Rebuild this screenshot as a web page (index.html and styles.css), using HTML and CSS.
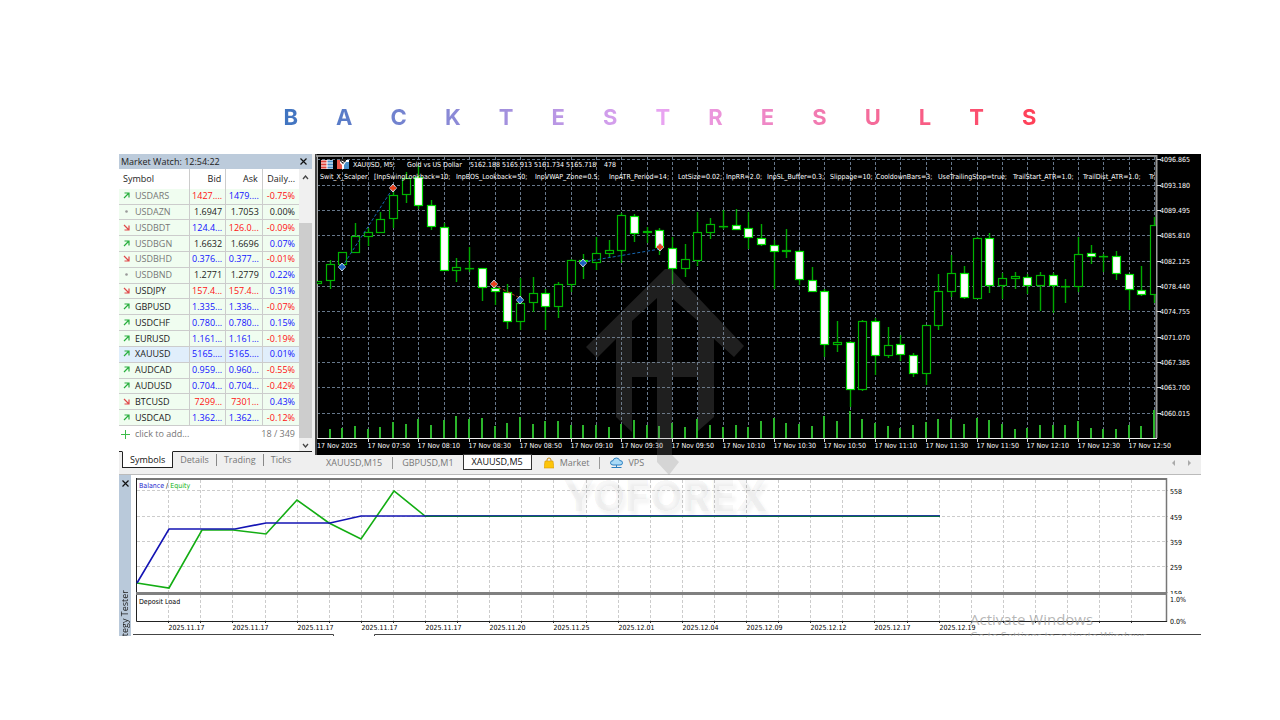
FILE: index.html
```html
<!DOCTYPE html>
<html lang="en">

<head>
    <meta charset="UTF-8">
    <meta name="viewport" content="width=device-width, initial-scale=1.0">
    <title>Backtest Results</title>
    <link rel="stylesheet" href="styles.css">
</head>

<body>
    <h1 class="title" aria-label="Backtest Results">
        <span>B</span><span>A</span><span>C</span><span>K</span><span>T</span><span>E</span><span>S</span><span>T</span><span>R</span><span>E</span><span>S</span><span>U</span><span>L</span><span>T</span><span>S</span>
    </h1>

    <main class="platform">
        <div class="top">
            <section class="watch">
                <header class="watch-header">
                    <h2>Market Watch: 12:54:22</h2>
                    <button class="close" aria-label="Close Market Watch">
                        <svg width="7" height="7" viewBox="0 0 7 7"><path d="M.5 .5 6.500 6.500M6.500 .5 .5 6.500" /></svg>
                    </button>
                </header>
                <div class="watch-body">
                    <div class="watch-list">
                        <table>
                            <thead>
                                <tr>
                                    <th class="symbol">Symbol</th>
                                    <th>Bid</th>
                                    <th>Ask</th>
                                    <th>Daily...</th>
                                </tr>
                            </thead>
                            <tbody id="quotes"></tbody>
                        </table>
                        <div class="add-row">
                            <svg width="9" height="9" viewBox="0 0 9 9"><path d="M4.500 0V9M0 4.500H9" /></svg>
                            <button>click to add...</button>
                            <span>18 / 349</span>
                        </div>
                    </div>
                    <div class="scrollbar">
                        <svg width="7" height="5" viewBox="0 0 7 5"><path d="M1 4 3.500 1 6 4" /></svg>
                        <div class="thumb"></div>
                        <svg width="7" height="5" viewBox="0 0 7 5"><path d="M1 1 3.500 4 6 1" /></svg>
                    </div>
                </div>
                <nav class="watch-tabs">
                    <button class="active">Symbols</button>
                    <button>Details</button>
                    <button>Trading</button>
                    <button>Ticks</button>
                </nav>
            </section>

            <section class="price">
                <svg class="price-chart" id="price-chart" viewBox="315 154 886 301" role="img" aria-label="XAUUSD M5 price chart">
                    <rect x="315" y="154" width="886" height="301" fill="#000" />
                    <rect x="315" y="154" width="2" height="301" fill="#444" />
                    <g id="price-grid"></g>
                    <path d="M316 156H1156" stroke="#8c8c8c" stroke-width="2" />
                    <path d="M317.500 156V438" stroke="#aaa" />
                    <path d="M1156.500 155V438" stroke="#999" stroke-width="2" />
                    <path d="M317 438.500H1157" stroke="#eee" />
                    <clipPath id="plot"><rect x="317" y="156" width="839" height="282" /></clipPath>
                    <g id="candles" clip-path="url(#plot)"></g>
                    <g class="trades">
                        <path d="M342 267 393 188M583 262 660 249" stroke="#1766b0" />
                        <path d="M494 285 520 298" stroke="#c0401c" />
                    </g>
                    <g id="deals"></g>
                    <g class="chart-icons">
                        <rect x="321" y="160" width="12" height="9" fill="#fff" />
                        <path d="M321 161.500H326.500M321 164.500H326.500M321 167.500H326.500" stroke="#e0453a" stroke-width="1.800" />
                        <path d="M327.500 161.500H333M327.500 164.500H333M327.500 167.500H333" stroke="#4a90c8" stroke-width="1.800" />
                        <rect x="337" y="160" width="12" height="9" fill="#fff" />
                        <path d="M337 160H340V163L342 165V169H337Z" fill="#e8584a" />
                        <path d="M349 162H346L344 165V169H349Z" fill="#4a90c8" />
                        <path d="M340 159H346V161L343 164 340 161Z" fill="#222" />
                        <path d="M341.500 161 344.500 162.500" stroke="#fff" />
                    </g>
                    <g class="chart-text">
                        <text x="353" y="167">XAUUSD, M5:</text>
                        <text x="407" y="167">Gold vs US Dollar</text>
                        <text x="470" y="167">5162.188 5165.913 5161.734 5165.718</text>
                        <text x="604" y="167">478</text>
                    </g>
                    <g class="chart-text" id="inputs"></g>
                    <g class="chart-text" id="price-labels"></g>
                </svg>
                <nav class="chart-tabs">
                    <button class="first">XAUUSD,M15</button>
                    <button>GBPUSD,M1</button>
                    <button class="active">XAUUSD,M5</button>
                    <button class="market">
                        <svg width="10" height="12" viewBox="0 0 10 12">
                            <path d="M3 5V3Q3 1 5 1T7 3V5" fill="none" stroke="#c98a10" />
                            <path d="M1 4H9L10 11H0Z" fill="#fdc50a" stroke="#d99a08" stroke-width=".6" />
                        </svg>
                        Market
                    </button>
                    <button class="vps">
                        <svg width="13" height="12" viewBox="0 0 13 12">
                            <path d="M3 8Q.5 8 .5 5.800T3 3.700Q3.500 1 6.300 1T9.700 3.500Q12.500 3.500 12.500 5.800T10 8Z" fill="#a9daf7" stroke="#2a7fc0" />
                            <path d="M6.500 8V11M1.500 10.500H11.500M5 10.500H8" stroke="#2a7fc0" />
                        </svg>
                        VPS
                    </button>
                    <div class="pager">
                        <button aria-label="Previous charts"><svg width="3" height="6" viewBox="0 0 3 6"><path d="M3 0V6L0 3Z" /></svg></button>
                        <button aria-label="Next charts"><svg width="3" height="6" viewBox="0 0 3 6"><path d="M0 0V6L3 3Z" /></svg></button>
                    </div>
                </nav>
            </section>
        </div>

        <section class="tester">
            <div class="tester-side">
                <button class="close" aria-label="Close Strategy Tester">
                    <svg width="7" height="7" viewBox="0 0 7 7"><path d="M.5 .5 6.500 6.500M6.500 .5 .5 6.500" /></svg>
                </button>
                <div class="tester-name"><h2>Strategy Tester</h2></div>
            </div>
            <svg class="tester-chart" viewBox="131 475 1070 161" role="img" aria-label="Balance and equity graph">
                <g id="tester-grid"></g>
                <path d="M136 479H1166.500" stroke="#777" stroke-width="2" />
                <path d="M1166.500 478V622" stroke="#777" stroke-width="1.500" />
                <path d="M136.500 478V621.500H1167" stroke="#222" fill="none" />
                <rect x="136" y="592" width="1031" height="3" fill="#808080" />
                <polyline class="equity" points="137,583 169,588 202,530 233,530 266,534 297,500 329,523 361,539 394,491 425,516 940,516" />
                <polyline class="balance" points="137,583 169,529 235,529 266,523 330,523 361,516 940,516" />
                <path d="M425 516.500H940" stroke="#0b6b45" />
                <text x="139" y="488"><tspan fill="#2222cc">Balance</tspan> / <tspan fill="#12b312">Equity</tspan></text>
                <text x="139" y="604">Deposit Load</text>
                <g id="tester-labels"></g>
                <path d="M133 634.500H333.500V636M374.500 636V634.500H1201" stroke="#444" fill="none" />
            </svg>
        </section>

        <div class="activate" aria-hidden="true">
            <p>Activate Windows</p>
            <p class="small">Go to Settings to activate Windows.</p>
        </div>

        <div class="watermark" aria-hidden="true">
            <svg width="160" height="210" viewBox="585 268 160 210">
                <path d="M665 269 586 347 597 358 616 339V417L632 432V377H657V462L669 475 679 462 672 455V377H698V431L714 417V339L734 357 744 346 671 269ZM657 298V362H632V321ZM672 298 698 321V362H672Z" fill-rule="evenodd" />
            </svg>
            <span>YOFOREX</span>
        </div>
    </main>

    <script src="chart.js"></script>
</body>

</html>
```
FILE: styles.css
```css
* {
    box-sizing: border-box;
}

body {
    margin: 0;
    padding: 103px 79px 0 119px;
    background-color: #fff;
    font-family: "Open Sans", "Noto Sans", sans-serif;
    font-size: 9px;
    line-height: 12px;
    color: #222;
}

h1, h2, p {
    margin: 0;
}

button {
    padding: 0;
    border: none;
    background: none;
    font: inherit;
    color: inherit;
    cursor: pointer;
}

svg {
    display: block;
}

.title {
    display: flex;
    justify-content: space-between;
    margin: 0 15.2% 23px;
    font-family: Inter, sans-serif;
    font-size: 22px;
    font-weight: 700;
    line-height: 28px;
    color: transparent;
    background-image: linear-gradient(90deg, #3f74c0, #e8a4f2 50%, #ff3f56);
    -webkit-background-clip: text;
    background-clip: text;
}

.platform {
    position: relative;
    overflow: hidden;
}

.top {
    display: grid;
    grid-template-columns: 196px 1fr;
    background-color: #efefef;
    border-bottom: 1px solid #bbb;
}

/* Market watch */
.watch {
    display: flex;
    flex-direction: column;
    margin-right: 3px;
}

.watch-header {
    display: flex;
    align-items: center;
    justify-content: space-between;
    height: 15px;
    padding: 0 5px 0 2px;
    background-color: #bccbdb;
}

h2 {
    font-size: 9px;
    font-weight: 400;
}

.close svg {
    fill: none;
    stroke: #111;
    stroke-width: 1.2;
}

.watch-body {
    display: flex;
    height: 282px;
    background-color: #fff;
}

.watch-list {
    flex: 1;
}

table {
    width: 100%;
    height: 257px;
    table-layout: fixed;
    border-collapse: collapse;
}

th, td {
    padding: 0 4px 0 0;
    text-align: right;
    white-space: nowrap;
    border-right: 1px solid #ccc;
}

th:last-child, td:last-child {
    border-right: none;
}

td:nth-child(2), td:nth-child(3) {
    padding-right: 3px;
}

th {
    height: 20px;
    font-weight: 400;
}

th.symbol {
    width: 70px;
    padding-left: 4px;
    text-align: left;
}

td {
    background-color: #f0fdf0;
    border-bottom: 1px solid #ccc;
    line-height: 10px;
}

td.symbol {
    padding-left: 4px;
    text-align: left;
}

td.symbol svg {
    display: inline-block;
    margin-right: 5px;
    fill: none;
    stroke-width: 1.2;
}

.selected td {
    background-color: #e0eefb;
}

.up {
    color: #1111ff;
}

.down {
    color: #ff1111;
}

.muted {
    color: #777;
}

.add-row {
    display: flex;
    align-items: center;
    gap: 5px;
    height: 16px;
    padding: 0 4px 0 2px;
    color: #777;
}

.add-row svg {
    stroke: #3dbb4a;
}

.add-row span {
    margin-left: auto;
}

.scrollbar {
    display: flex;
    flex-direction: column;
    align-items: center;
    width: 13px;
    padding: 6px 0 3px;
    background-color: #f0f0f0;
}

.scrollbar svg {
    fill: none;
    stroke: #444;
    stroke-width: 1.3;
}

.thumb {
    flex: 1;
    width: 100%;
    margin: 43px 0 5px;
    background-color: #cdcdcd;
}

.watch-tabs {
    display: flex;
    align-items: flex-start;
    padding-left: 3px;
    border-top: 1px solid #222;
    color: #777;
}

.watch-tabs button {
    height: 12px;
    margin-top: 2px;
    padding: 0 7px;
    border-right: 1px solid #888;
    line-height: 12px;
}

.watch-tabs button:last-child {
    border-right: none;
}

.watch-tabs .active {
    height: 17px;
    margin-top: -1px;
    background-color: #fff;
    border: 1px solid #222;
    border-top-color: #fff;
    color: #111;
}

/* Price chart */
.price-chart, .tester-chart {
    width: 100%;
    height: auto;
}

.chart-text, .tester-chart text {
    font-family: "DejaVu Sans Condensed", "DejaVu Sans", sans-serif;
    font-size: 7px;
}

.chart-text {
    fill: #fff;
}

.grid-line {
    stroke: #66778a;
    stroke-dasharray: 3 2;
}

.trades {
    stroke-dasharray: 3 2;
}

.chart-tabs {
    display: flex;
    align-items: flex-start;
    height: 19px;
    padding-left: 1px;
    color: #777;
}

.chart-tabs button {
    display: flex;
    align-items: center;
    gap: 6px;
    height: 12px;
    margin-top: 2px;
    padding: 0 10px;
}

.chart-tabs .first, .chart-tabs .market {
    border-right: 1px solid #999;
}

.chart-tabs .first + button {
    padding: 0 9px;
}

.chart-tabs .active {
    height: 16px;
    margin-top: -1px;
    padding: 0 8px;
    background-color: #fff;
    border: 1px solid #333;
    color: #111;
}

.chart-tabs .market {
    padding-left: 12px;
}

.chart-tabs .vps {
    gap: 5px;
}

.chart-tabs .pager {
    display: flex;
    gap: 13px;
    margin-left: auto;
    padding-right: 10px;
}

.chart-tabs .pager button {
    padding: 0;
}

.pager svg {
    fill: #aaa;
}

/* Strategy tester */
.tester {
    display: grid;
    grid-template-columns: 12px 1fr;
}

.tester-side {
    display: flex;
    flex-direction: column;
    align-items: center;
    justify-content: space-between;
    padding-top: 5px;
    background-color: #b9c9da;
}

.tester-name {
    height: 46px;
    overflow: hidden;
}

.tester-name h2 {
    writing-mode: vertical-rl;
    transform: rotate(180deg);
    white-space: nowrap;
}

.tester-chart text {
    fill: #000;
}

.tester-grid-line {
    stroke: #ccc;
    stroke-dasharray: 3 2;
}

.equity, .balance {
    fill: none;
    stroke-width: 1.6;
}

.equity {
    stroke: #13ad13;
}

.balance {
    stroke: #1414b4;
}

/* Overlays */
.activate {
    position: absolute;
    top: 456px;
    left: 851px;
    font-size: 15px;
    line-height: 18px;
    color: rgba(150, 150, 150, 0.7);
    white-space: nowrap;
}

.activate .small {
    font-size: 11px;
    line-height: 16px;
}

.watermark {
    position: absolute;
    top: 114px;
    left: 444px;
    display: flex;
    flex-direction: column;
    align-items: center;
    pointer-events: none;
}

.watermark svg {
    fill: rgba(128, 128, 128, 0.24);
}

.watermark span {
    font-family: Inter, sans-serif;
    font-size: 42px;
    font-weight: 800;
    line-height: 36px;
    color: rgba(0, 0, 0, 0.03);
    text-shadow: 3px 4px 3px rgba(0, 0, 0, 0.04);
}
```
FILE: chart.js
```js
const quotes = [
    ['up', 'USDARS', '1427....', 'down', '1479....', 'up', '-0.75%', true],
    ['flat', 'USDAZN', '1.6947', '', '1.7053', '', '0.00%', true],
    ['down', 'USDBDT', '124.4...', 'up', '126.0...', 'down', '-0.09%', true],
    ['up', 'USDBGN', '1.6632', '', '1.6696', '', '0.07%', true],
    ['down', 'USDBHD', '0.376...', 'up', '0.377...', 'up', '-0.01%', true],
    ['flat', 'USDBND', '1.2771', '', '1.2779', '', '0.22%', true],
    ['down', 'USDJPY', '157.4...', 'down', '157.4...', 'down', '0.31%'],
    ['up', 'GBPUSD', '1.335...', 'up', '1.336...', 'up', '-0.07%'],
    ['up', 'USDCHF', '0.780...', 'up', '0.780...', 'up', '0.15%'],
    ['up', 'EURUSD', '1.161...', 'up', '1.161...', 'up', '-0.19%'],
    ['up', 'XAUUSD', '5165....', 'up', '5165....', 'up', '0.01%'],
    ['up', 'AUDCAD', '0.959...', 'up', '0.960...', 'up', '-0.55%'],
    ['up', 'AUDUSD', '0.704...', 'up', '0.704...', 'up', '-0.42%'],
    ['down', 'BTCUSD', '7299...', 'down', '7301...', 'down', '0.43%'],
    ['up', 'USDCAD', '1.362...', 'up', '1.362...', 'up', '-0.12%']
];

const arrows = {
    up: '<path d="M1 6 6 1M1.500 1H6V5.500" stroke="#27ae3c" />',
    down: '<path d="M1 1 6 6M1.500 6H6V1.500" stroke="#e04848" />',
    flat: '<circle cx="3.500" cy="3.500" r="1.300" fill="#999" />'
};

document.getElementById('quotes').innerHTML = quotes.map(q => {
    const [dir, name, bid, bidClass, ask, askClass, daily, muted] = q;
    const dailyClass = daily === '0.00%' ? '' : daily[0] === '-' ? 'down' : 'up';
    return `
        <tr class="${name === 'XAUUSD' ? 'selected' : ''}">
            <td class="symbol ${muted ? 'muted' : ''}"><svg width="7" height="7" viewBox="0 0 7 7">${arrows[dir]}</svg>${name}</td>
            <td class="${bidClass}">${bid}</td>
            <td class="${askClass}">${ask}</td>
            <td class="${dailyClass}">${daily}</td>
        </tr>`;
}).join('');

// Expert inputs along the top of the chart
const inputs = [
    [320, 'Swit_X_Scalper'], [374, '[InpSwingLookback=10;'], [456, 'InpBOS_Lookback=50;'],
    [535, 'InpVWAP_Zone=0.5;'], [609, 'InpATR_Period=14;'], [678, 'LotSize=0.02;'],
    [726, 'InpRR=2.0;'], [767, 'InpSL_Buffer=0.3;'], [830, 'Slippage=10;'],
    [876, 'CooldownBars=3;'], [938, 'UseTrailingStop=true;'], [1013, 'TrailStart_ATR=1.0;'],
    [1083, 'TrailDist_ATR=1.0;'], [1149, 'Tr']
];
document.getElementById('inputs').innerHTML = inputs.map(([x, text]) => `<text x="${x}" y="179">${text}</text>`).join('');

// Candles: [high, bodyTop, bodyBottom, low, filled, volume]
const candles = [
    [281, 281, 284, 284, 0, 0], [260, 264, 281, 289, 0, 9], [252, 252, 265, 270, 0, 10],
    [223, 236, 253, 253, 0, 12], [228, 232, 237, 246, 0, 9], [212, 219, 233, 233, 0, 11],
    [190, 195, 219, 228, 0, 16], [172, 178, 195, 203, 0, 14], [165, 177, 206, 209, 1, 19],
    [200, 205, 227, 230, 1, 13], [223, 227, 271, 271, 1, 18], [258, 267, 271, 282, 0, 22],
    [247, 268, 268, 272, 0, 19], [268, 268, 288, 301, 1, 20], [285, 288, 292, 305, 1, 12],
    [284, 292, 322, 329, 1, 15], [278, 303, 322, 330, 0, 21], [277, 293, 303, 312, 0, 14],
    [289, 293, 307, 330, 1, 17], [282, 284, 307, 318, 0, 17], [259, 260, 285, 292, 0, 13],
    [254, 260, 262, 279, 1, 13], [237, 253, 263, 270, 0, 13], [240, 250, 254, 258, 0, 11],
    [213, 215, 251, 263, 0, 14], [214, 216, 234, 242, 1, 18], [227, 231, 233, 243, 0, 13],
    [228, 230, 248, 255, 1, 12], [237, 248, 269, 284, 1, 15], [244, 259, 269, 277, 0, 11],
    [212, 232, 261, 266, 0, 19], [218, 224, 233, 239, 0, 13], [210, 226, 227, 229, 0, 11],
    [209, 225, 230, 230, 1, 13], [212, 228, 238, 249, 1, 11], [224, 238, 245, 246, 1, 17],
    [240, 245, 252, 289, 1, 20], [229, 250, 252, 258, 0, 15], [250, 251, 280, 285, 1, 14],
    [267, 280, 292, 292, 1, 12], [289, 291, 345, 357, 1, 22], [321, 342, 345, 352, 0, 17],
    [341, 342, 390, 407, 1, 27], [320, 321, 390, 391, 0, 19], [318, 321, 356, 375, 1, 15],
    [327, 345, 356, 358, 0, 12], [335, 344, 355, 361, 1, 10], [353, 355, 374, 377, 1, 13],
    [325, 325, 374, 385, 0, 16], [274, 291, 326, 330, 0, 19], [255, 273, 292, 297, 0, 19],
    [266, 273, 298, 299, 1, 14], [237, 238, 299, 299, 0, 20], [233, 238, 286, 293, 1, 18],
    [273, 278, 286, 299, 0, 14], [272, 276, 279, 289, 0, 9], [274, 277, 286, 294, 1, 10],
    [272, 275, 286, 311, 0, 13], [273, 275, 286, 313, 1, 13], [279, 286, 286, 303, 0, 13],
    [237, 254, 287, 292, 0, 17], [245, 253, 257, 264, 1, 10], [254, 256, 256, 272, 0, 9],
    [251, 256, 274, 280, 1, 9], [274, 274, 290, 310, 1, 13], [266, 290, 295, 296, 1, 12],
    [217, 225, 295, 303, 0, 28]
];

const barX = i => Math.round(342.3 + (i - 2) * 12.685);

document.getElementById('candles').innerHTML = candles.map(([high, top, bottom, low, filled, volume], i) => {
    const x = barX(i);
    return `
        <path d="M${x + .5} ${high}V${top}M${x + .5} ${bottom}V${low}" stroke="#00a800" stroke-width="1.4" />
        <rect x="${x - 3.5}" y="${top + .5}" width="8" height="${Math.max(bottom - top - 1, .3)}" fill="${filled ? '#fff' : '#000'}" stroke="${filled ? '#00e000' : '#00b400'}" stroke-width="1.2" />
        <path d="M${x} ${438 - volume}V438" stroke="#2bb52b" stroke-width="2" />`;
}).join('');

// Grid, time axis and price axis
let grid = '';
let labels = '<text x="317" y="448">17 Nov 2025</text>';
for (let i = 0; i < 33; i++) {
    const x = barX(i * 2 + 2) + .5;
    grid += `<path class="grid-line" d="M${x} 157V438" />`;
    if (i % 2) {
        const minutes = 7 * 60 + 50 + (i - 1) * 10;
        const time = String(Math.floor(minutes / 60)).padStart(2, '0') + ':' + minutes % 60;
        labels += `<path d="M${x} 438V442" stroke="#ddd" /><text x="${x - 1}" y="448">17 Nov ${time.padEnd(5, '0')}</text>`;
    }
}
for (let i = 0; i < 11; i++) {
    const y = Math.round(159.2 + i * 25.33) + .5;
    grid += `<path class="grid-line" d="M317 ${y}H1156" />`;
    labels += `<path d="M1157 ${y}H1161" stroke="#ddd" /><text x="1160" y="${y + 2.5}">${(4096.865 - i * 3.685).toFixed(3)}</text>`;
}
document.getElementById('price-grid').innerHTML = grid;
document.getElementById('price-labels').innerHTML = labels;

// Deal markers
const deals = [
    [393, 188, 0], [494, 284, 0], [660, 247, 0],
    [342, 267, 1], [520, 300, 1], [583, 263, 1]
];
document.getElementById('deals').innerHTML = deals.map(([x, y, buy]) => `
    <path d="M${x - 3.5} ${y}L${x} ${y - 4}L${x + 3.5} ${y}L${x} ${y + 4}Z" fill="${buy ? '#1c62c0' : '#e8401c'}" stroke="#c8d4e4" />
    <path d="M${x - 3} ${y}H${x + 3}" stroke="${buy ? '#1c62c0' : '#e8401c'}" stroke-width="2" />`).join('');

// Tester graph
const dates = ['11.17', '11.17', '11.17', '11.17', '11.17', '11.20', '11.25', '12.01', '12.04', '12.09', '12.12', '12.17', '12.19'];
let testerGrid = '';
let testerLabels = '';
for (let i = 0; i < 31; i++) {
    const x = Math.round(168.2 + i * 32.1) + .5;
    testerGrid += `<path class="tester-grid-line" d="M${x} 480V621" /><path d="M${x} 621V623" stroke="#333" />`;
    if (i % 2 === 0 && dates[i / 2]) {
        testerLabels += `<text x="${x}" y="630">2025.${dates[i / 2]}</text>`;
    }
}
['558', '459', '359', '259', '159'].forEach((value, i) => {
    const y = Math.round(490.3 + i * 25.3) + .5;
    testerGrid += `<path class="tester-grid-line" d="M137 ${y}H1168" />`;
    testerLabels += `<text x="1170" y="${y + 3}">${value}</text>`;
});
testerLabels += '<rect x="1168" y="594" width="20" height="3" fill="#fff" />';
testerLabels += '<text x="1170" y="602">1.0%</text><text x="1170" y="624">0.0%</text>';
document.getElementById('tester-grid').innerHTML = testerGrid;
document.getElementById('tester-labels').innerHTML = testerLabels;
```
